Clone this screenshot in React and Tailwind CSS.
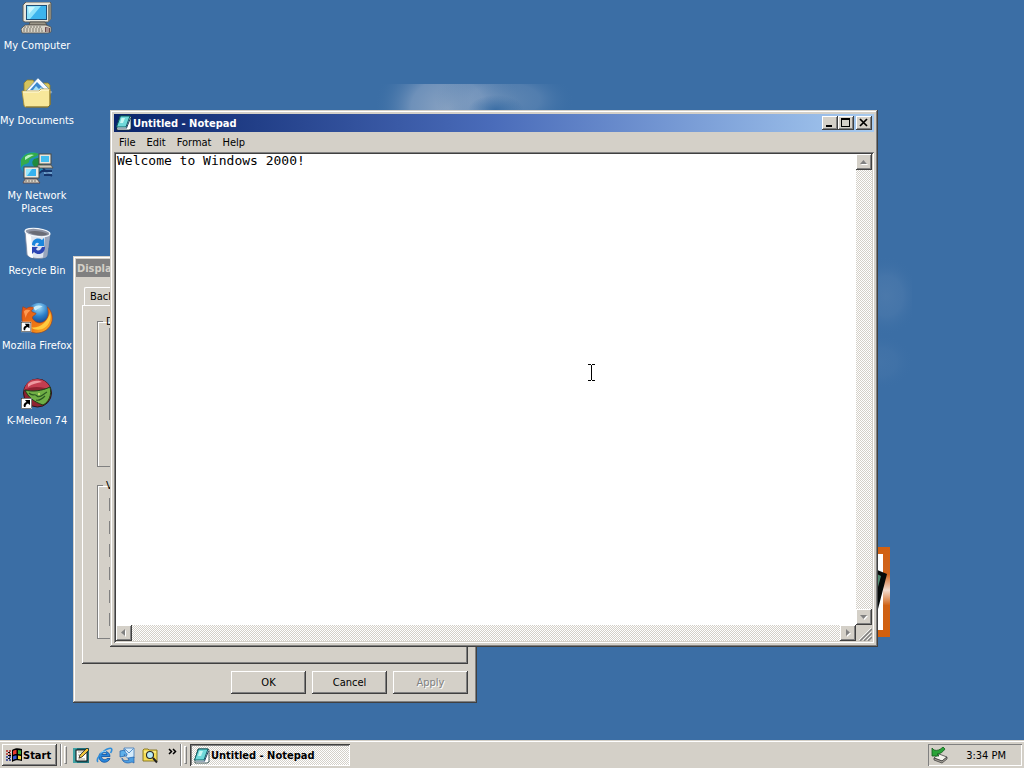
const RAISED = "bg-[#d4d0c8] shadow-[inset_-1px_-1px_#404040,inset_1px_1px_#fff,inset_-2px_-2px_#808080]"
const SUNKEN = "shadow-[inset_1px_1px_#808080,inset_-1px_-1px_#fff]"
const WINDOW = "bg-[#d4d0c8] shadow-[inset_-1px_-1px_#404040,inset_1px_1px_#d4d0c8,inset_-2px_-2px_#808080,inset_2px_2px_#fff]"
const DITHER = "bg-[repeating-conic-gradient(#fff_0_25%,#d4d0c8_0_50%)] bg-[length:2px_2px]"

const MonitorShape = () => (
  <>
    <path d="M2 3 L5 0 H29 L30 1 V17 L27 20 H4 L2 19Z" fill="#e9e6dc" stroke="#5c5c58" strokeWidth="1" />
    <path d="M27 3 L30 1 V17 L27 20Z" fill="#8b8778" />
    <rect x="5" y="3" width="21" height="15" fill="#1d4d78" />
    <rect x="6" y="4" width="19" height="13" fill="#3db4ee" />
    <path d="M6 4 H20 L9 17 H6Z" fill="#8ee2fb" />
    <path d="M7 5 H14 L8 12Z" fill="#c9f5ff" />
  </>
)

const ComputerIcon = () => (
  <svg width="32" height="32" viewBox="0 0 32 32" aria-hidden="true">
    <MonitorShape />
    <path d="M9 20 H24 L26 23 H8Z" fill="#9a9588" stroke="#45433d" strokeWidth="0.7" />
    <path d="M4 23 H25 L30 25 V30 L27 31 H1 L0 27Z" fill="#d9d4c8" stroke="#55524a" strokeWidth="0.8" />
    <path d="M3 25 H20 M2 27 H21 M2 29 H22" stroke="#7b766b" strokeDasharray="2 1" />
    <path d="M24 25 L29 26 V30 H24Z" fill="#6b4a4c" />
    <path d="M25 27 H28 M25 29 H28" stroke="#e3d9d2" />
  </svg>
)

const DocumentsIcon = () => (
  <svg width="32" height="32" viewBox="0 0 32 32" aria-hidden="true">
    <path d="M3 29 V6 L6 3 H12 L14 6 H27 L29 8 V28Z" fill="#d5c45e" stroke="#8b7b2b" strokeWidth="0.8" />
    <path d="M5 14 L17 1 L31 15 L27 20 H6Z" fill="#f7fbff" stroke="#6690b9" strokeWidth="0.8" />
    <path d="M9 13 L16 5 L24 13Z" fill="#3b88cf" />
    <path d="M12 13 L15 9 L18 12 L20 10 L23 13Z" fill="#a8e1f4" />
    <path d="M1 14 H18 L20 12 H29 V28 L27 30 H4 L3 28Z" fill="#f7e79a" stroke="#a8913a" strokeWidth="0.8" />
    <path d="M2 15 H18 L20 13 H28" fill="none" stroke="#fffce0" />
    <path d="M5 30 H27 L29 28 V13" fill="none" stroke="#81702a" />
  </svg>
)

const NetworkIcon = () => (
  <svg width="34" height="32" viewBox="0 0 34 32" aria-hidden="true">
    <circle cx="12" cy="12" r="12" fill="#1f8fb9" />
    <path d="M1 8 C4 1 13 -1 19 2 C16 6 9 5 9 10 C7 13 3 11 1 16Z" fill="#34ab4b" />
    <path d="M14 7 L21 5 L23 14 L16 16 C12 13 11 10 14 7Z" fill="#1f8a3e" />
    <path d="M5 5 C8 2 12 2 14 3 C10 5 8 6 5 8Z" fill="#b7efbf" />
    <path d="M18 22 L22 19 H32 M24 23 H32 M23 16 L27 21 L32 24" fill="none" stroke="#15356b" strokeWidth="2" />
    <path d="M24 21 H32" stroke="#9fd1f2" />
    <rect x="19" y="2" width="12" height="10" fill="#e8e5dc" stroke="#4c4b46" />
    <rect x="21" y="4" width="8" height="6" fill="#43bdf0" />
    <path d="M18 13 H31 L33 16 H17Z" fill="#cfc9bb" stroke="#4c4b46" strokeWidth="0.8" />
    <rect x="4" y="15" width="15" height="11" fill="#ebe8df" stroke="#4c4b46" />
    <rect x="6" y="17" width="10" height="7" fill="#36b1ee" />
    <path d="M6 17 H12 L7 24 H6Z" fill="#9ae7fd" />
    <path d="M5 27 H17 L20 31 H3Z" fill="#d9d3c6" stroke="#5d4b49" strokeWidth="0.9" />
    <path d="M5 29 H17" stroke="#77716a" strokeDasharray="2 1" />
  </svg>
)

const RecycleIcon = () => (
  <svg width="32" height="32" viewBox="0 0 32 32" aria-hidden="true">
    <path d="M4 4 L6 28 C10 32 22 33 26 29 L29 7Z" fill="#dde4f0" stroke="#77849c" strokeWidth="0.8" />
    <path d="M5 6 L7 28 C8 30 10 31 12 31 L10 9Z" fill="#ffffff" />
    <path d="M24 9 L22 31 C24 31 25 30 26 29 L29 7Z" fill="#98a5bd" />
    <ellipse cx="16.500" cy="5.500" rx="12.500" ry="4" transform="rotate(7 16.500 5.500)" fill="#8e94a5" stroke="#f4f7fb" strokeWidth="1.200" />
    <path d="M7 5 C13 3 21 4 27 7 C21 10 12 8 7 5Z" fill="#6a6c76" />
    <path d="M11 18 C11 12 17 10 21 13 L23 11 V19 H16 L18 16.500 C16 15 14 16 14 19Z" fill="#1b86dc" />
    <path d="M11 20 H17 L15 22 C17 25 20 23 21 20 H24 C24 27 17 29 13 25 L11 27Z" fill="#2c46b4" />
  </svg>
)

const ShortcutArrow = () => (
  <>
    <rect x="0" y="21" width="11" height="11" fill="#fff" />
    <rect x="0.5" y="21.500" width="10" height="10" fill="none" stroke="#222" strokeWidth="0.6" />
    <path d="M4 23 H9 V28 L7 26.500 C5 27 4.500 28.500 4.500 30 H3 C2 28 3 25.500 5.500 25Z" fill="#000" />
  </>
)

const FirefoxIcon = () => (
  <svg width="32" height="32" viewBox="0 0 34 34" aria-hidden="true">
    <defs>
      <radialGradient id="globe" cx="0.5" cy="0.2" r="0.7">
        <stop offset="0" stopColor="#9fdcf8" />
        <stop offset="0.5" stopColor="#2b7fc9" />
        <stop offset="1" stopColor="#123a82" />
      </radialGradient>
      <linearGradient id="fox" x1="0" y1="0" x2="1" y2="1">
        <stop offset="0" stopColor="#e0531b" />
        <stop offset="0.6" stopColor="#ee7a14" />
        <stop offset="1" stopColor="#ffc531" />
      </linearGradient>
    </defs>
    <circle cx="19" cy="14" r="13" fill="url(#globe)" />
    <path d="M2 5 L6 7 C8 5 12 5 14 6 L11 9 C11 11 14 11 16 12 C15 15 12 14 12 17 C14 21 19 24 24 21 C29 18 30 13 28 5 C32 9 34 14 33 20 C31 29 24 33 16 33 C6 32 1 24 1 17 C1 12 1 9 2 5Z" fill="url(#fox)" stroke="#a63c10" strokeWidth="0.6" />
    <path d="M31 11 C33 19 29 27 22 29 C17 30 13 29 11 27 C20 28 28 22 31 11Z" fill="#ffcb3f" />
    <path d="M3 10 C5 8 8 8 10 9 C7 11 6 13 5 17Z" fill="#ff9a51" />
    <path d="M13 6 C16 3 20 3 23 5 C19 6 17 8 15 9Z" fill="#c6ecfb" />
    <ShortcutArrow />
  </svg>
)

const MeleonIcon = () => (
  <svg width="32" height="32" viewBox="0 0 32 32" aria-hidden="true">
    <circle cx="16.500" cy="16" r="14" fill="#8e2230" stroke="#2b1519" />
    <path d="M3 13 C5 5 10 2 16 2 C23 2 28 6 30 13 C20 9 11 9 3 13Z" fill="#c43e50" />
    <path d="M7 7 C11 3 18 3 21 5 C16 6 11 7 7 10Z" fill="#ee9aa0" />
    <path d="M4 13 C11 15 21 14 29 10 C31 18 28 25 22 28 C13 25 7 20 4 13Z" fill="#6fae45" stroke="#1c3e18" />
    <path d="M8 16 C12 20 13 16 16 19 C19 22 22 17 26 15 M15 23 C18 24 21 22 24 19" fill="none" stroke="#2a5722" strokeWidth="1.100" />
    <circle cx="18" cy="17" r="1" fill="#d6e772" />
    <ShortcutArrow />
  </svg>
)

const NotepadIcon = () => (
  <svg width="16" height="16" viewBox="0 0 16 16" aria-hidden="true" className="shrink-0">
    <path d="M4 1 H14 L15 2 V14 L13 15 H1 V12Z" fill="#fff" stroke="#133" strokeWidth="0.8" />
    <path d="M4.500 1 H14 L10 12 H0.500Z" fill="#6fd9da" stroke="#0b5a60" />
    <path d="M5.500 3 H9 L7 8 H4Z" fill="#c6f8f4" />
    <path d="M10.500 13 L14.500 3" stroke="#246" />
    <path d="M2 13.500 H11" stroke="#9ab" />
  </svg>
)

const StartFlag = () => (
  <svg width="17" height="16" viewBox="0 0 17 16" aria-hidden="true">
    <path d="M6 3 C9 1 12 1 16 2 V14 C12 13 9 13 6 15Z" fill="#000" />
    <path d="M7 4 C8 3 9 3 10.500 3 V7 C9 7 8 7 7 8Z" fill="#e8382d" />
    <path d="M12 3 L15 3.500 V7.500 L12 7Z" fill="#38a93c" />
    <path d="M7 9.500 C8 8.500 9 8.500 10.500 8.500 V12 C9 12 8 12 7 13Z" fill="#3758d6" />
    <path d="M12 8.500 L15 9 V12.500 L12 12Z" fill="#f3cf33" />
    <path d="M0 4 H2 M3 4 H5 M0 7 H2 M3 7 H5" stroke="#b22b26" strokeWidth="1.500" />
    <path d="M0 10 H2 M3 10 H5 M0 13 H2 M3 13 H5" stroke="#26348f" strokeWidth="1.500" />
    <path d="M2 5.500 H4 M2 8.500 H5 M2 11.500 H4" stroke="#000" />
  </svg>
)

const ShowDesktopIcon = () => (
  <svg width="17" height="17" viewBox="0 0 17 17" aria-hidden="true">
    <rect x="0" y="1" width="16" height="15" fill="#20757f" />
    <path d="M0 1 H4 V16 H0Z" fill="#3fa3a6" />
    <rect x="3" y="3" width="11" height="11" fill="#fff" stroke="#111" />
    <path d="M5 5 H10 M5 8 H8 M5 12 H12" stroke="#a9a58f" />
    <path d="M14 1 L16 3 L9 10 L6 11 L7 8Z" fill="#f1c43c" stroke="#222" strokeWidth="0.8" />
  </svg>
)

const ExplorerIcon = () => (
  <svg width="17" height="17" viewBox="0 0 17 17" aria-hidden="true">
    <path d="M14 9.500 H5.500 C5.500 13 10 13.500 11 11.500 H14 C12 17 3 16.500 3 9.500 C3 3 14 2.500 14 9.500Z M5.700 7.500 H11 C10.500 5 6.500 5 5.700 7.500Z" fill="#2887dc" stroke="#1559a6" strokeWidth="0.9" fillRule="evenodd" />
    <path d="M2 15 C-1 12 7 3 13 1.500 C17 0.500 16 4 14.500 6" fill="none" stroke="#2f8edb" strokeWidth="1.600" />
    <path d="M4.500 6 C6 4 9 4 10 4.500" fill="none" stroke="#a9e1ff" />
  </svg>
)

const OutlookIcon = () => (
  <svg width="17" height="17" viewBox="0 0 17 17" aria-hidden="true">
    <path d="M5 1 H15 V11 L10 12 L5 8Z" fill="#d5ebfb" stroke="#3f79b7" strokeWidth="0.8" />
    <path d="M5 1 L10 6 L15 1" fill="none" stroke="#5d94cb" />
    <path d="M1 4 L6 3 V5 C8 6 9 8 7 9 C7 7 5 7 5 8 L6 9 L1 10Z" fill="#5fb0ea" stroke="#1e60aa" strokeWidth="0.7" />
    <path d="M3 11 C4 14 7 14 10 13 L9 11 L15 10 L15 16 L13 15 C9 17 3 16 3 11Z" fill="#4d9fe2" stroke="#205fa9" strokeWidth="0.7" />
  </svg>
)

const SearchFolderIcon = () => (
  <svg width="17" height="17" viewBox="0 0 17 17" aria-hidden="true">
    <path d="M1 14 V3 L2 2 H6 L7 3 H15 V14Z" fill="#f5dc56" stroke="#82701a" strokeWidth="0.9" />
    <path d="M2 5 H14" stroke="#fff8b7" />
    <circle cx="8" cy="8" r="3.500" fill="#b9eaf6" stroke="#252525" strokeWidth="1.100" />
    <path d="M11 11 L15 15.500" stroke="#222" strokeWidth="2" />
  </svg>
)

const TrayIcon = () => (
  <svg width="18" height="17" viewBox="0 0 18 17" aria-hidden="true">
    <path d="M3 11 L8 7 L16 10 L11 14Z" fill="#f4f2ec" stroke="#444" strokeWidth="0.8" />
    <path d="M3 11 V13 L11 16 L16 12 V10 L11 14Z" fill="#a8a49b" stroke="#333" strokeWidth="0.7" />
    <path d="M1 1 L3 3 C6 4 9 3 12 0 L14 2 C12 5 9 7 6 7 L8 9 H1Z" fill="#2ba438" stroke="#105c1c" strokeWidth="0.8" />
  </svg>
)

const Arrow = ({ d }) => (
  <svg width="16" height="16" viewBox="0 0 16 16" aria-hidden="true">
    <path d={d} fill="#fff" transform="translate(1 1)" />
    <path d={d} fill="#808080" />
  </svg>
)

const shortcuts = [
  { label: "My Computer", Icon: ComputerIcon },
  { label: "My Documents", Icon: DocumentsIcon },
  { label: "My Network Places", Icon: NetworkIcon },
  { label: "Recycle Bin", Icon: RecycleIcon },
  { label: "Mozilla Firefox", Icon: FirefoxIcon },
  { label: "K-Meleon 74", Icon: MeleonIcon },
]

const quickLaunch = [
  { label: "Show Desktop", Icon: ShowDesktopIcon },
  { label: "Internet Explorer", Icon: ExplorerIcon },
  { label: "Outlook Express", Icon: OutlookIcon },
  { label: "Search", Icon: SearchFolderIcon },
]

const effects = ["Transition effects", "Smooth edges", "Large icons", "All colors", "Window contents", "Keyboard indicators"]

function Wallpaper() {
  return (
    <>
      <svg className="absolute left-[360px] top-[84px]" width="220" height="30" viewBox="0 0 220 30" aria-hidden="true">
        <defs>
          <radialGradient id="cloud">
            <stop offset="0" stopColor="#8aa3c2" />
            <stop offset="0.5" stopColor="#7f9cc0" stopOpacity="0.75" />
            <stop offset="1" stopColor="#3b6ea5" stopOpacity="0" />
          </radialGradient>
          <radialGradient id="gap">
            <stop offset="0" stopColor="#3b6ea5" />
            <stop offset="1" stopColor="#3b6ea5" stopOpacity="0" />
          </radialGradient>
        </defs>
        <ellipse cx="88" cy="24" rx="74" ry="60" fill="url(#cloud)" />
        <ellipse cx="145" cy="16" rx="70" ry="34" fill="url(#cloud)" opacity="0.45" />
        <ellipse cx="136" cy="26" rx="28" ry="15" fill="url(#gap)" />
      </svg>
      <svg className="absolute left-[860px] top-[250px]" width="52" height="140" viewBox="0 0 52 140" aria-hidden="true">
        <ellipse cx="26" cy="46" rx="34" ry="40" fill="url(#cloud)" opacity="0.2" />
        <ellipse cx="20" cy="112" rx="34" ry="28" fill="url(#cloud)" opacity="0.1" />
      </svg>
      <svg className="absolute left-[860px] top-[547px]" width="30" height="90" viewBox="0 0 30 90" aria-hidden="true">
        <defs>
          <linearGradient id="frame" x1="0" y1="0" x2="0" y2="1">
            <stop offset="0" stopColor="#d2600f" />
            <stop offset="0.3" stopColor="#d0651f" />
            <stop offset="0.48" stopColor="#f3ddd0" />
            <stop offset="0.65" stopColor="#cf6114" />
            <stop offset="1" stopColor="#d2600f" />
          </linearGradient>
        </defs>
        <rect width="30" height="90" fill="url(#frame)" />
        <rect width="23" height="76" y="7" fill="#fff" />
        <path d="M10 20 L27 27 L18 62 H10Z" fill="#060a09" />
        <path d="M17 27 L21 29 L18 40Z" fill="#4f8a70" />
      </svg>
    </>
  )
}

function DisplayDialog() {
  return (
    <section aria-label="Display Properties" className={`absolute left-[73px] top-[256px] flex h-[447px] w-[404px] flex-col p-[3px] ${WINDOW}`}>
      <header className="flex h-[18px] shrink-0 items-center bg-[#808080] px-px font-bold text-[#d4d0c8]">Display Properties</header>
      <div className="flex min-h-0 flex-1 flex-col px-[6px] pb-[6px] pt-[10px]">
        <button className="ml-[2px] h-[18px] w-[70px] rounded-t-[2px] border-l border-t border-white">Background</button>
        <div className={`min-h-0 flex-1 px-[15px] pt-[10px] ${RAISED}`}>
          <fieldset className="h-[152px] border border-[#808080] px-[11px] shadow-[inset_1px_1px_#fff]">
            <legend className="-ml-[6px] px-[3px] leading-[13px]">Desktop icons</legend>
            <div className="h-[92px] border border-[#808080] bg-[#d4d0c8]" />
          </fieldset>
          <fieldset className="mt-[12px] h-[160px] border border-[#808080] px-[11px] shadow-[inset_1px_1px_#fff]">
            <legend className="-ml-[6px] px-[3px] leading-[13px]">Visual effects</legend>
            <div className="flex flex-col gap-[10px] pt-[6px]">
              {effects.map((name) => (
                <input key={name} type="checkbox" aria-label={name} className="size-[13px] appearance-none border border-[#808080] bg-white" />
              ))}
            </div>
          </fieldset>
        </div>
        <footer className="mt-[7px] flex shrink-0 justify-end gap-[6px]">
          <button className={`h-[23px] w-[75px] ${RAISED}`}>OK</button>
          <button className={`h-[23px] w-[75px] ${RAISED}`}>Cancel</button>
          <button disabled className={`h-[23px] w-[75px] text-[#808080] [text-shadow:1px_1px_#fff] ${RAISED}`}>Apply</button>
        </footer>
      </div>
    </section>
  )
}

function Notepad() {
  return (
    <section aria-label="Untitled - Notepad" className={`absolute left-[110px] top-[110px] flex h-[537px] w-3/4 flex-col p-[4px] ${WINDOW}`}>
      <header className="flex h-[18px] shrink-0 items-center bg-[linear-gradient(to_right,#0a246a,#4a6cba_50%,#a6caf0)] pl-[2px] pr-[2px] font-bold text-white">
        <NotepadIcon />
        <h1 className="ml-px flex-1">Untitled - Notepad</h1>
        <button aria-label="Minimize" className={`h-[14px] w-[16px] ${RAISED}`}>
          <svg width="16" height="14" aria-hidden="true"><path d="M4 9 H10 V11 H4Z" /></svg>
        </button>
        <button aria-label="Maximize" className={`h-[14px] w-[16px] ${RAISED}`}>
          <svg width="16" height="14" aria-hidden="true"><path d="M3 2 H12 V11 H3Z M4 4 V10 H11 V4Z" fillRule="evenodd" /></svg>
        </button>
        <button aria-label="Close" className={`ml-[2px] h-[14px] w-[16px] ${RAISED}`}>
          <svg width="16" height="14" aria-hidden="true"><path d="M4 3 L11 10 M11 3 L4 10" stroke="#000" strokeWidth="1.700" /></svg>
        </button>
      </header>
      <nav className="flex h-[20px] shrink-0 items-center gap-px">
        {["File", "Edit", "Format", "Help"].map((item) => (
          <button key={item} className="px-[5px]">{item}</button>
        ))}
      </nav>
      <div className="grid min-h-0 flex-1 grid-cols-[1fr_16px] grid-rows-[1fr_16px] bg-white p-[2px] shadow-[inset_1px_1px_#808080,inset_-1px_-1px_#fff,inset_2px_2px_#404040,inset_-2px_-2px_#d4d0c8]">
        <textarea
          aria-label="Document text"
          spellCheck={false}
          defaultValue="Welcome to Windows 2000!"
          className="resize-none overflow-hidden bg-white pl-px font-['DejaVu_Sans_Mono',monospace] text-[13px] leading-[14px] outline-none"
        />
        <div className={`flex flex-col justify-between ${DITHER}`}>
          <button aria-label="Scroll up" className={`size-[16px] ${RAISED}`}><Arrow d="M4 10 L7.500 6 L11 10Z" /></button>
          <button aria-label="Scroll down" className={`size-[16px] ${RAISED}`}><Arrow d="M4 6 L7.500 10 L11 6Z" /></button>
        </div>
        <div className={`flex justify-between ${DITHER}`}>
          <button aria-label="Scroll left" className={`size-[16px] ${RAISED}`}><Arrow d="M9 4 L5 7.500 L9 11Z" /></button>
          <button aria-label="Scroll right" className={`size-[16px] ${RAISED}`}><Arrow d="M6 4 L10 7.500 L6 11Z" /></button>
        </div>
        <div className="bg-[#d4d0c8]">
          <svg width="16" height="16" aria-hidden="true">
            <path d="M4 16 L16 4 M8 16 L16 8 M12 16 L16 12" stroke="#808080" strokeWidth="1.500" />
            <path d="M3 15 L15 3 M7 15 L15 7 M11 15 L15 11" stroke="#fff" strokeWidth="0.8" />
          </svg>
        </div>
      </div>
    </section>
  )
}

const Grip = () => (
  <div className="flex h-[22px] gap-[2px]">
    <div className="w-[2px] border-l border-r border-l-[#808080] border-r-white" />
    <div className="my-[2px] w-[3px] border border-b-[#808080] border-l-white border-r-[#808080] border-t-white" />
  </div>
)

function Taskbar() {
  return (
    <footer className="z-10 flex h-[28px] shrink-0 items-center border-t border-[#d4d0c8] bg-[#d4d0c8] px-[2px] pt-[3px] pb-[2px] shadow-[inset_0_1px_#fff]">
      <button className={`flex h-[22px] w-[55px] items-center pl-[4px] font-bold ${RAISED}`}>
        <StartFlag />
        Start
      </button>
      <div className="ml-[3px]"><Grip /></div>
      <div className="ml-[6px] flex items-center gap-[6px]">
        {quickLaunch.map(({ label, Icon }) => (
          <button key={label} aria-label={label}><Icon /></button>
        ))}
      </div>
      <button aria-label="More" className="mb-[8px] ml-[9px]">
        <svg width="9" height="7" viewBox="0 0 9 7" aria-hidden="true">
          <path d="M1 1 L3.500 3.500 L1 6 M5 1 L7.500 3.500 L5 6" fill="none" stroke="#000" strokeWidth="1.500" />
        </svg>
      </button>
      <div className="ml-[3px]"><Grip /></div>
      <button className={`ml-[3px] flex h-[22px] w-[160px] items-center gap-px pl-[4px] pt-px font-bold shadow-[inset_1px_1px_#404040,inset_-1px_-1px_#fff,inset_2px_2px_#808080] ${DITHER}`}>
        <NotepadIcon />
        Untitled - Notepad
      </button>
      <div className={`ml-auto flex h-[22px] w-[94px] items-center justify-between pl-[3px] pr-[16px] ${SUNKEN}`}>
        <TrayIcon />
        <time>3:34 PM</time>
      </div>
    </footer>
  )
}

export default function App() {
  return (
    <div className="flex h-screen flex-col overflow-hidden bg-[#3b6ea5] font-['DejaVu_Sans_Condensed','DejaVu_Sans',sans-serif] text-[11px] leading-[13px] text-black">
      <main className="relative min-h-0 flex-1">
        <Wallpaper />
        <ul className="flex w-[74px] flex-col pt-[2px] text-white">
          {shortcuts.map(({ label, Icon }) => (
            <li key={label} className="h-[75px]">
              <button className="flex w-full flex-col items-center">
                <span className="flex h-[37px] items-start"><Icon /></span>
                <span className="text-center">{label}</span>
              </button>
            </li>
          ))}
        </ul>
        <DisplayDialog />
        <Notepad />
        <svg className="pointer-events-none absolute left-[587px] top-[364px]" width="9" height="17" aria-hidden="true">
          <path d="M1 0.500 H4 M5 0.500 H8 M4.500 1 V16 M1 16.500 H4 M5 16.500 H8" fill="none" stroke="#000" />
        </svg>
      </main>
      <Taskbar />
    </div>
  )
}
